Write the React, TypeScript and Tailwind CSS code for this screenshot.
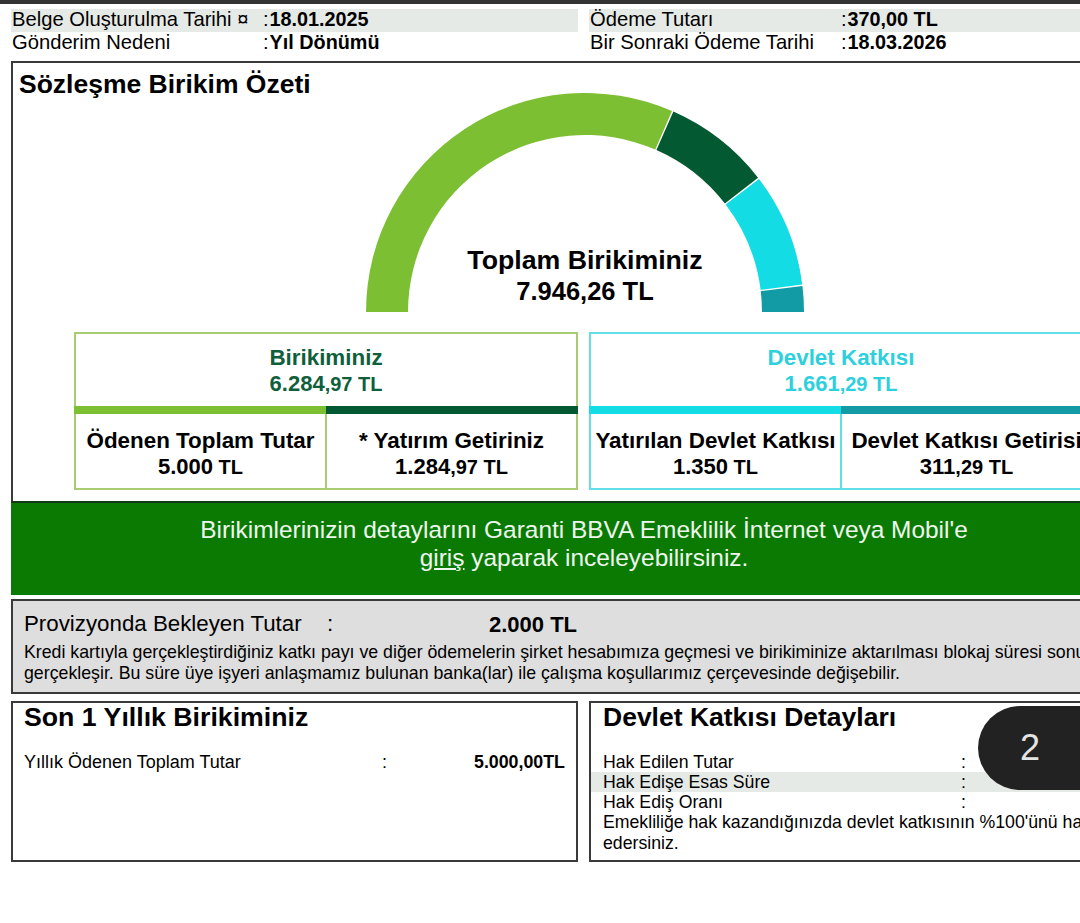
import React from "react";

// gauge segments, angles in degrees from the +x axis
const segments = [
  { from: 180, to: 66.6, color: "#7dbf33" },
  { from: 66.2, to: 37.8, color: "#035a32" },
  { from: 37.4, to: 7.2, color: "#13dce4" },
  { from: 6.8, to: 0, color: "#129ba5" },
];

function arc(from: number, to: number) {
  const cx = 219;
  const cy = 219;
  const R = 219;
  const r = 177;
  const p = (rad: number, a: number) => {
    const t = (a * Math.PI) / 180;
    return `${(cx + rad * Math.cos(t)).toFixed(2)} ${(cy - rad * Math.sin(t)).toFixed(2)}`;
  };
  return `M${p(R, from)} A${R} ${R} 0 0 1 ${p(R, to)} L${p(r, to)} A${r} ${r} 0 0 0 ${p(r, from)} Z`;
}

function Money({ main, rest }: { main: string; rest: string }) {
  return (
    <>
      <span className="text-[22px]">{main}</span>
      <span className="text-[20px]">{rest}</span>
    </>
  );
}

function Cell({ title, main, rest, className }: { title: string; main: string; rest: string; className?: string }) {
  return (
    <div className={"flex flex-1 flex-col items-center pt-[14px] font-bold text-black whitespace-nowrap " + (className ?? "")}>
      <div className="text-[22.4px] leading-[26px]">{title}</div>
      <div className="leading-[26px]">
        <Money main={main} rest={rest} />
      </div>
    </div>
  );
}

function SumBox({ tone, title, main, rest, left, right }: any) {
  const green = tone === "green";
  return (
    <div className={"h-[158px] w-[504px] border-2 flex flex-col " + (green ? "border-[#a9cb72]" : "border-[#62dfe6]")}>
      <div className={"flex h-[72px] flex-col items-center pt-[11px] font-bold " + (green ? "text-[#0f5f3c]" : "text-[#2dd0dc]")}>
        <div className="text-[22.4px] leading-[26px]">{title}</div>
        <div className="leading-[26px]">
          <Money main={main} rest={rest} />
        </div>
      </div>
      <div className="mx-[-2px] flex h-[8px]">
        <div className={"flex-1 " + (green ? "bg-[#7dbf33]" : "bg-[#13dce4]")} />
        <div className={"flex-1 " + (green ? "bg-[#035a32]" : "bg-[#129ba5]")} />
      </div>
      <div className="flex flex-1">
        <Cell {...left} className={"border-r-2 " + (green ? "border-[#a9cb72]" : "border-[#62dfe6]")} />
        <Cell {...right} />
      </div>
    </div>
  );
}

function InfoRow({ label, value, shaded }: { label: string; value: string; shaded?: boolean }) {
  return (
    <div className={"flex h-[23px] items-center pb-[2px] pl-[1px] text-[20.2px] text-black whitespace-nowrap " + (shaded ? "bg-[#e6eae6]" : "")}>
      <div className="w-[251px]">{label}</div>
      <div>
        :<span className="ml-[1px] text-[19.8px] font-bold">{value}</span>
      </div>
    </div>
  );
}

function DetailRow({ label, shaded }: { label: string; shaded?: boolean }) {
  return (
    <div className={"flex h-[20px] items-center pl-[12px] " + (shaded ? "bg-[#e6eae6]" : "")}>
      <div className="w-[358px]">{label}</div>
      <div>:</div>
    </div>
  );
}

export default function App() {
  return (
    <div className="relative h-[923px] w-[1080px] overflow-hidden bg-white font-['Liberation_Sans',Arial,sans-serif] text-black">
      <div className="h-[4px] bg-[#333333]" />

      <div className="w-[1146px] ml-[11px]">
        {/* header info */}
        <div className="mt-[5px] grid grid-cols-[567px_567px] gap-x-[11px]">
          <div>
            <InfoRow shaded label="Belge Oluşturulma Tarihi ¤" value="18.01.2025" />
            <InfoRow label="Gönderim Nedeni" value="Yıl Dönümü" />
          </div>
          <div>
            <InfoRow shaded label="Ödeme Tutarı" value="370,00 TL" />
            <InfoRow label="Bir Sonraki Ödeme Tarihi" value="18.03.2026" />
          </div>
        </div>

        {/* summary */}
        <div className="mt-[6px] h-[440px] border-x-2 border-t-2 border-[#3a3a3a] relative">
          <div className="pl-[6px] pt-[6px] text-[26.5px] font-bold leading-[30px]">Sözleşme Birikim Özeti</div>
          <div className="relative mt-[-6px] ml-[353px] h-[219px] w-[438px]">
            <svg width="438" height="219" viewBox="0 0 438 219" className="block">
              {segments.map((s) => (
                <path key={s.color} d={arc(s.from, s.to)} fill={s.color} />
              ))}
            </svg>
            <div className="absolute left-0 right-0 top-[152px] text-center font-bold leading-[31px]">
              <div className="text-[26.7px]">Toplam Birikiminiz</div>
              <div className="text-[25.5px]">7.946,26 TL</div>
            </div>
          </div>
          <div className="mt-[20px] ml-[61px] flex gap-[11px]">
            <SumBox
              tone="green"
              title="Birikiminiz"
              main="6.284"
              rest=",97 TL"
              left={{ title: "Ödenen Toplam Tutar", main: "5.000", rest: " TL" }}
              right={{ title: "* Yatırım Getiriniz", main: "1.284", rest: ",97 TL" }}
            />
            <SumBox
              tone="cyan"
              title="Devlet Katkısı"
              main="1.661"
              rest=",29 TL"
              left={{ title: "Yatırılan Devlet Katkısı", main: "1.350", rest: " TL" }}
              right={{ title: "Devlet Katkısı Getirisi", main: "311", rest: ",29 TL" }}
            />
          </div>
        </div>

        {/* banner */}
        <div className="flex h-[94px] flex-col items-center border-t-2 border-[#123a12] bg-[#0a7a03] pt-[13px] text-[24.45px] leading-[28px] text-[#eef7ee]">
          <div>Birikimlerinizin detaylarını Garanti BBVA Emeklilik İnternet veya Mobil'e</div>
          <div>
            <span className="underline">giriş</span> yaparak inceleyebilirsiniz.
          </div>
        </div>

        {/* provision */}
        <div className="mt-[4px] h-[95px] border-2 border-[#3a3a3a] bg-[#dedede] pl-[11px] whitespace-nowrap">
          <div className="flex h-[41px] items-center pt-[5px] text-[22.3px]">
            <div className="w-[303px]">Provizyonda Bekleyen Tutar</div>
            <div className="w-[162px]">:</div>
            <div className="font-bold text-[22px]">2.000 TL</div>
          </div>
          <div className="text-[17.75px] leading-[21px]">
            Kredi kartıyla gerçekleştirdiğiniz katkı payı ve diğer ödemelerin şirket hesabımıza geçmesi ve birikiminize aktarılması blokaj süresi sonunda
            <br />
            gerçekleşir. Bu süre üye işyeri anlaşmamız bulunan banka(lar) ile çalışma koşullarımız çerçevesinde değişebilir.
          </div>
        </div>

        {/* bottom panels */}
        <div className="mt-[7px] grid grid-cols-[567px_567px] gap-x-[11px]">
          <div className="h-[161px] border-2 border-[#3a3a3a]">
            <div className="pl-[11px] text-[26.7px] font-bold leading-[28px]">Son 1 Yıllık Birikiminiz</div>
            <div className="mt-[21px] flex pl-[11px] text-[18px] leading-[20px]">
              <div className="w-[358px]">Yıllık Ödenen Toplam Tutar</div>
              <div className="w-[92px]">:</div>
              <div className="text-[17.8px] font-bold">5.000,00TL</div>
            </div>
          </div>
          <div className="h-[161px] border-2 border-[#3a3a3a] text-[17.7px] leading-[20px] whitespace-nowrap">
            <div className="pl-[12px] text-[26.5px] font-bold leading-[28px]">Devlet Katkısı Detayları</div>
            <div className="mt-[21px]">
              <DetailRow label="Hak Edilen Tutar" />
              <DetailRow shaded label="Hak Edişe Esas Süre" />
              <DetailRow label="Hak Ediş Oranı" />
            </div>
            <div className="pl-[12px] leading-[21px]">
              Emekliliğe hak kazandığınızda devlet katkısının %100'ünü hak
              <br />
              edersiniz.
            </div>
          </div>
        </div>
      </div>

      {/* page number pill */}
      <div className="absolute left-[978px] top-[706px] flex h-[84px] w-[130px] items-center rounded-l-[42px] bg-[#222222] pl-[42px] text-[36px] text-[#e4e4e4]">
        2
      </div>
    </div>
  );
}
